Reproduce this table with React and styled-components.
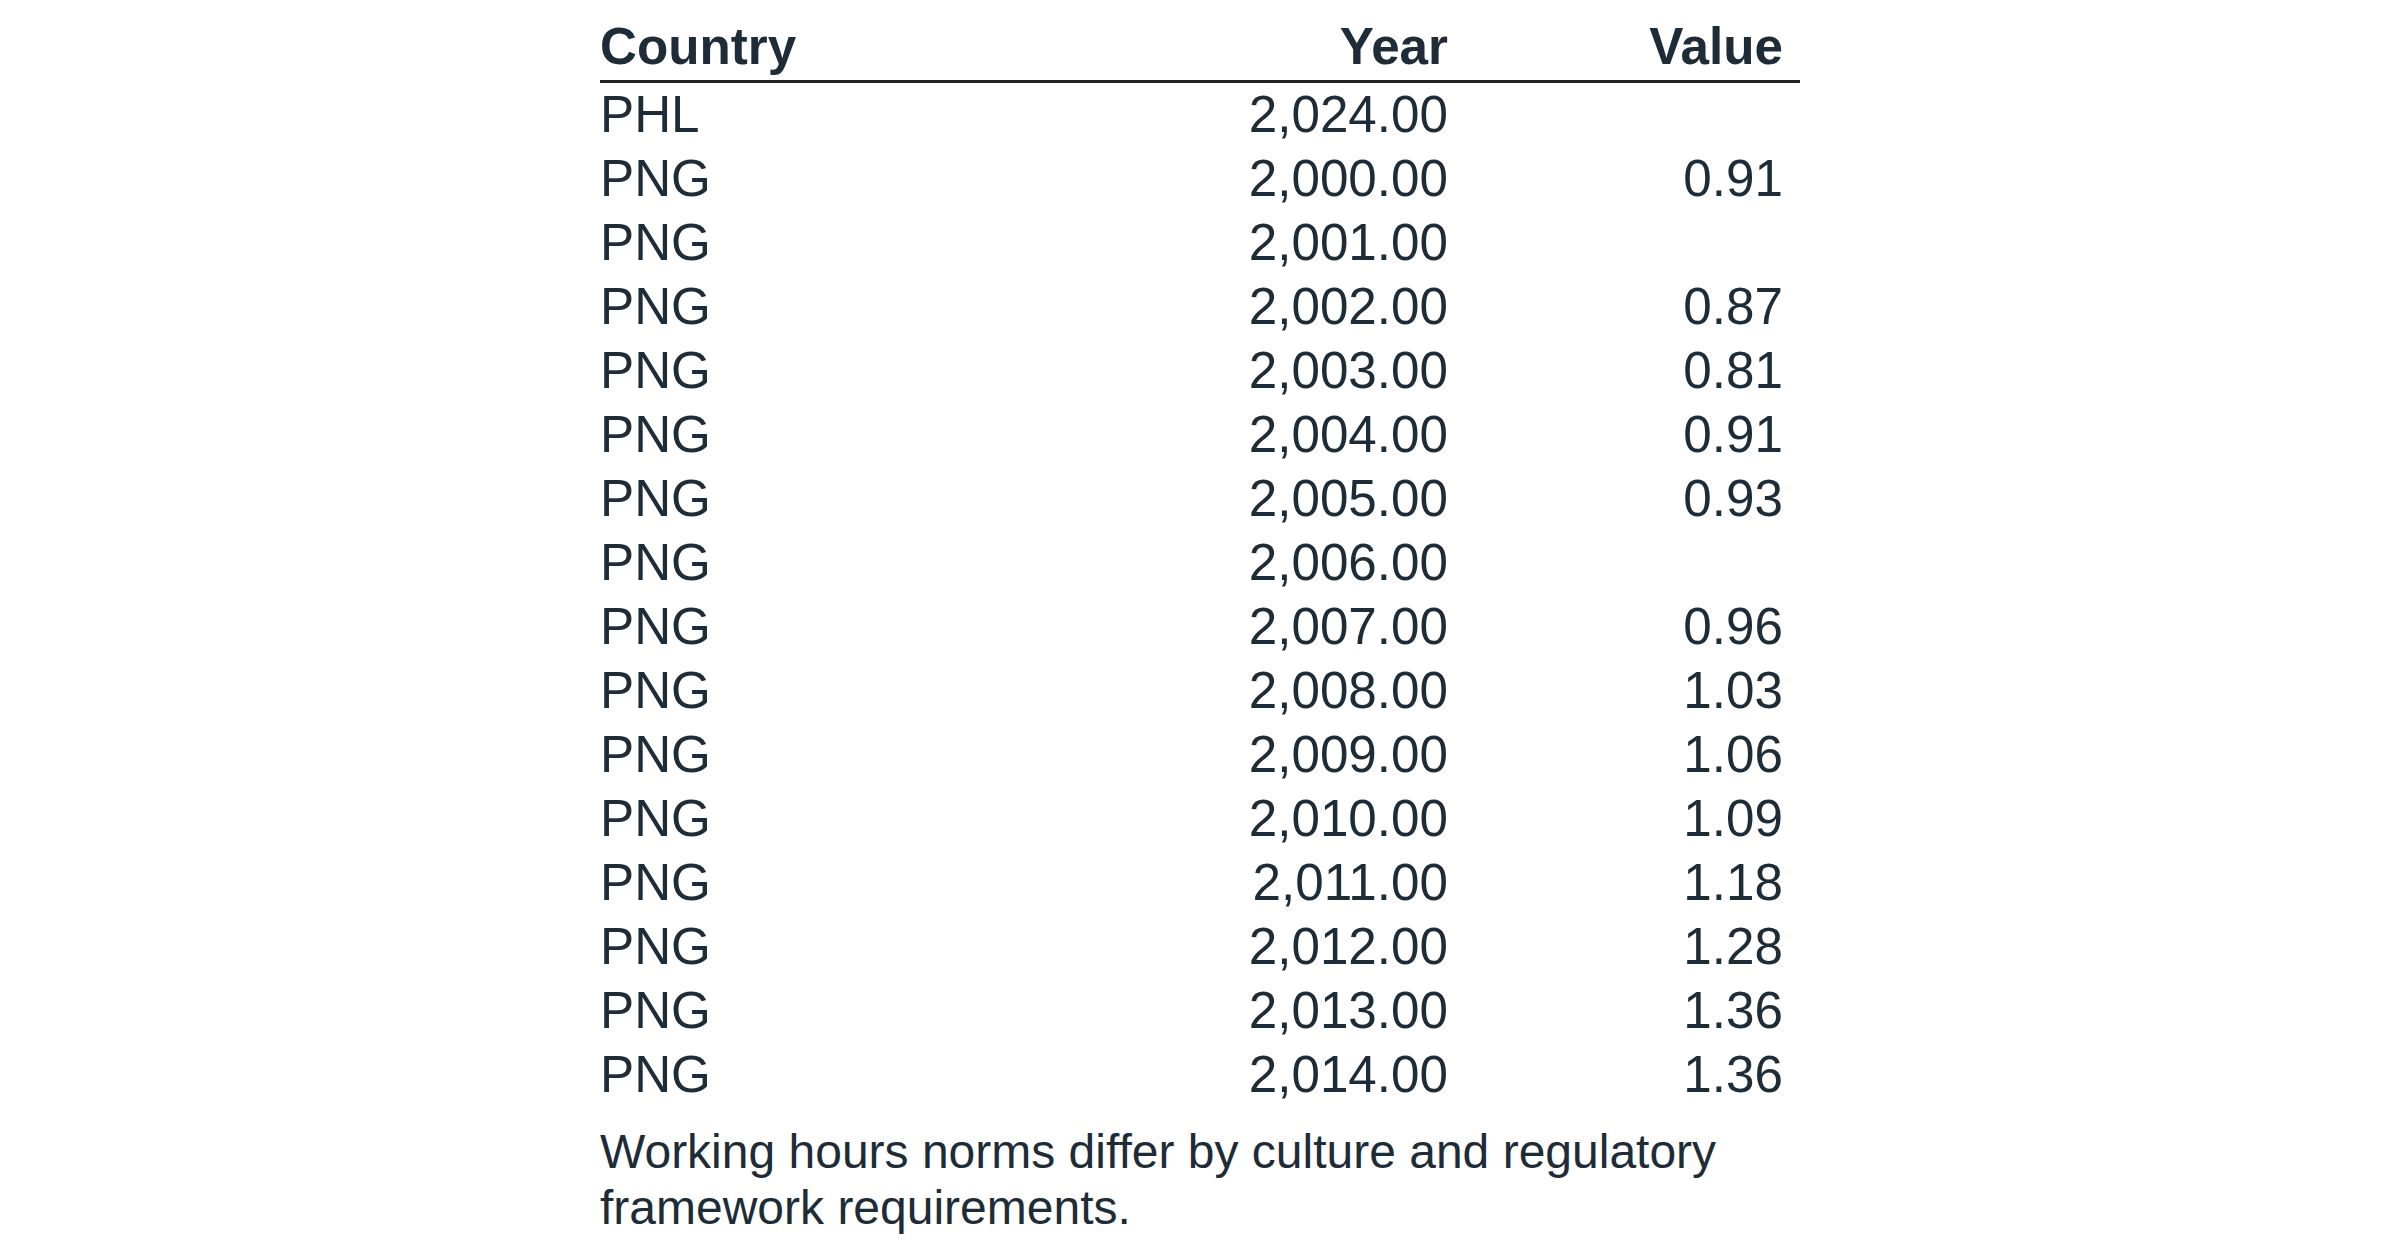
import React from 'react';
import styled, { createGlobalStyle } from 'styled-components';

const GlobalStyle = createGlobalStyle`
  html, body {
    margin: 0;
    padding: 0;
    background: #ffffff;
  }
  body {
    font-family: "Liberation Sans", Arial, sans-serif;
    color: #1e2c37;
  }
`;

const rows = [
  ['PHL', '2,024.00', ''],
  ['PNG', '2,000.00', '0.91'],
  ['PNG', '2,001.00', ''],
  ['PNG', '2,002.00', '0.87'],
  ['PNG', '2,003.00', '0.81'],
  ['PNG', '2,004.00', '0.91'],
  ['PNG', '2,005.00', '0.93'],
  ['PNG', '2,006.00', ''],
  ['PNG', '2,007.00', '0.96'],
  ['PNG', '2,008.00', '1.03'],
  ['PNG', '2,009.00', '1.06'],
  ['PNG', '2,010.00', '1.09'],
  ['PNG', '2,011.00', '1.18'],
  ['PNG', '2,012.00', '1.28'],
  ['PNG', '2,013.00', '1.36'],
  ['PNG', '2,014.00', '1.36'],
];

const Page = styled.main`
  display: flex;
  justify-content: center;
  padding-top: 15px;
`;

const Wrapper = styled.section`
  width: 1200px;
`;

const Row = styled.div`
  display: grid;
  grid-template-columns: 540px 323px 337px;
  height: 64px;
  line-height: 64px;
  font-size: 51.2px;
  font-weight: ${(p) => (p.$head ? 700 : 400)};
  border-bottom: ${(p) => (p.$head ? '3px solid #222222' : 'none')};
  padding-bottom: ${(p) => (p.$head ? '1px' : '0')};
  box-sizing: content-box;
`;

const Cell = styled.div`
  white-space: nowrap;
  text-align: ${(p) => (p.$num ? 'right' : 'left')};
  padding-right: ${(p) => p.$pad || '0'};
`;

const Note = styled.p`
  margin: 17px 0 0;
  font-size: 48px;
  line-height: 56px;
`;

const App = () => {
  return (
    <>
      <GlobalStyle />
      <Page>
        <Wrapper>
          <Row $head>
            <Cell>Country</Cell>
            <Cell $num $pad="15px">Year</Cell>
            <Cell $num $pad="17px">Value</Cell>
          </Row>
          {rows.map((r, i) => (
            <Row key={i}>
              <Cell>{r[0]}</Cell>
              <Cell $num $pad="15px">{r[1]}</Cell>
              <Cell $num $pad="17px">{r[2]}</Cell>
            </Row>
          ))}
          <Note>
            Working hours norms differ by culture and regulatory framework requirements.
          </Note>
        </Wrapper>
      </Page>
    </>
  );
};

export default App;
